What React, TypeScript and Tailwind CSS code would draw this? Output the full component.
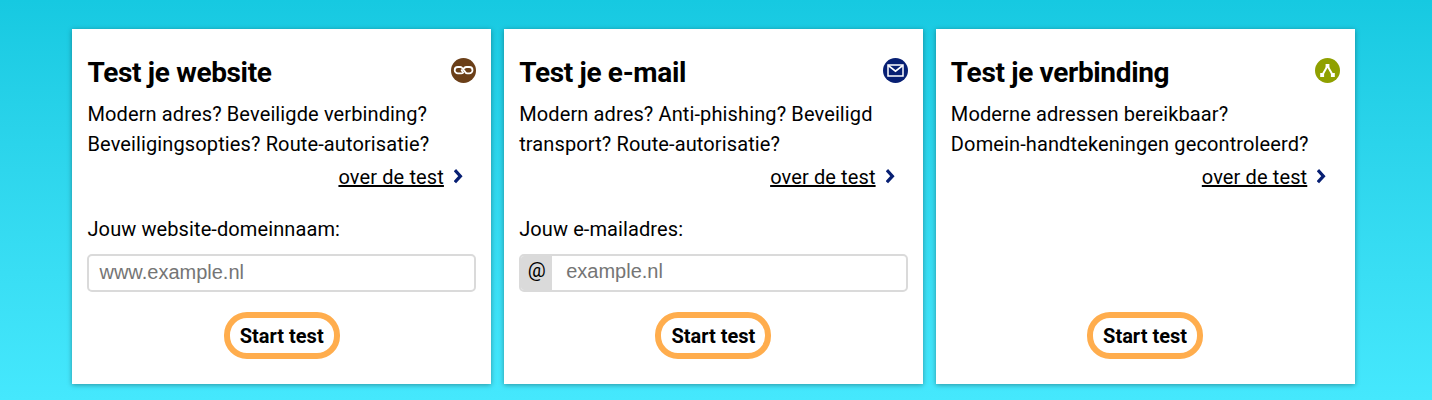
import React, { JSX } from "react";

const LinkIcon = (): JSX.Element => (
  <svg className="w-[25px] h-[25px]" viewBox="0 0 25 25" fill="none">
    <circle cx="12.5" cy="12.5" r="12.5" fill="#6b3f18" />
    <g stroke="#fff" strokeWidth="1.8" strokeLinecap="round">
      <path d="M12.2 14.6 Q11.4 15.4 10.2 15.4 H6.9 A3.2 3.2 0 0 1 6.9 9 H9.4 Q10.6 9 11.6 10.4 L14.2 14 Q15 15.4 16.4 15.4 H18.3 A3.2 3.2 0 0 0 18.3 9 H15.6 Q14.2 9 13.2 10" />
      <path d="M10.6 12.2 L11.5 13.4" />
    </g>
  </svg>
);

const MailIcon = (): JSX.Element => (
  <svg className="w-[25px] h-[25px]" viewBox="0 0 25 25" fill="none">
    <circle cx="12.5" cy="12.5" r="12.5" fill="#071f73" />
    <rect x="5" y="7" width="15" height="11" stroke="#fff" strokeWidth="1.5" />
    <path d="M5.3 7.5 L12.5 13.2 L19.7 7.5" stroke="#fff" strokeWidth="1.6" />
  </svg>
);

const ConnectionIcon = (): JSX.Element => (
  <svg className="w-[25px] h-[25px]" viewBox="0 0 25 25" fill="none">
    <circle cx="12.5" cy="12.5" r="12.5" fill="#8fa000" />
    <path d="M7.3 17 L12.5 8 L17.7 17" stroke="#fff" strokeWidth="1.9" />
    <path d="M10.6 6h3.8v3.8h-3.8z M5.2 15h3.9v3.9H5.2z M15.9 15h3.9v3.9h-3.9z" fill="#fff" />
  </svg>
);

interface TestCardProps {
  title: string;
  icon: JSX.Element;
  lines: [string, string];
  children?: React.ReactNode;
}

const TestCard = ({ title, icon, lines, children }: TestCardProps): JSX.Element => (
  <section className="flex flex-col w-[419px] h-[355px] pl-[15.2px] pr-[15.4px] pt-[25px] bg-white shadow-[0_1px_5px_rgba(0,0,0,0.35)]">
    <div className="flex justify-between items-start">
      <h2 className="mt-px text-[28px] leading-[36px] font-bold tracking-[-0.34px]">{title}</h2>
      <div className="mt-[4px] -mr-[0.3px]">{icon}</div>
    </div>
    <p className="mt-[8px] text-[20px] leading-[30px] tracking-[0.12px] whitespace-nowrap">
      {lines[0]}
      <br />
      {lines[1]}
    </p>
    <div className="flex items-center justify-end h-[30px] mt-[3px] pr-[13px]">
      <a href="#" className="text-[20px] leading-[30px] tracking-[0.12px] underline">
        over de test
      </a>
      <svg className="w-[9px] h-[15px] ml-[10px] mb-[2px]" viewBox="0 0 9 15" fill="none">
        <path d="M0.9 1.2 L6.4 7.2 L0.9 13.2" stroke="#071f73" strokeWidth="3.2" />
      </svg>
    </div>
    <form className="flex flex-col grow mt-[22px] items-center">
      <div className="w-full h-[78px]">{children}</div>
      <button
        type="button"
        className="w-[116px] h-[47px] mt-[20px] border-6 border-[#ffad4d] rounded-[23px] text-[20px] leading-[30px] font-bold whitespace-nowrap"
      >
        Start test
      </button>
    </form>
  </section>
);

export default function App(): JSX.Element {
  return (
    <main className="flex gap-[12.7px] h-[400px] pl-[72.3px] pt-[29px] overflow-hidden bg-linear-to-b from-[#16c9e1] to-[#45e8fd] text-black font-[Roboto,sans-serif]">
      <TestCard
        title="Test je website"
        icon={<LinkIcon />}
        lines={["Modern adres? Beveiligde verbinding?", "Beveiligingsopties? Route-autorisatie?"]}
      >
        <label htmlFor="web" className="block text-[20px] leading-[30px] tracking-[0.1px]">
          Jouw website-domeinnaam:
        </label>
        <input
          id="web"
          placeholder="www.example.nl"
          className="block w-full h-[38px] mt-[10px] px-[10px] pb-[2px] border-2 border-[#dadada] rounded-[5px] font-['Liberation_Sans',sans-serif] text-[20px] placeholder:text-[#757575]"
        />
      </TestCard>
      <TestCard
        title="Test je e-mail"
        icon={<MailIcon />}
        lines={["Modern adres? Anti-phishing? Beveiligd", "transport? Route-autorisatie?"]}
      >
        <label htmlFor="mail" className="block text-[20px] leading-[30px] tracking-[0.1px]">
          Jouw e-mailadres:
        </label>
        <div className="flex w-full h-[38px] mt-[10px] border-2 border-[#dadada] rounded-[5px] overflow-hidden">
          <span className="w-[31px] shrink-0 bg-[#dadada] text-center text-[20px] leading-[29px]">@</span>
          <input
            id="mail"
            placeholder="example.nl"
            className="grow min-w-0 pl-[14px] pb-[4px] font-['Liberation_Sans',sans-serif] text-[20px] placeholder:text-[#757575]"
          />
        </div>
      </TestCard>
      <TestCard
        title="Test je verbinding"
        icon={<ConnectionIcon />}
        lines={["Moderne adressen bereikbaar?", "Domein-handtekeningen gecontroleerd?"]}
      />
    </main>
  );
}
